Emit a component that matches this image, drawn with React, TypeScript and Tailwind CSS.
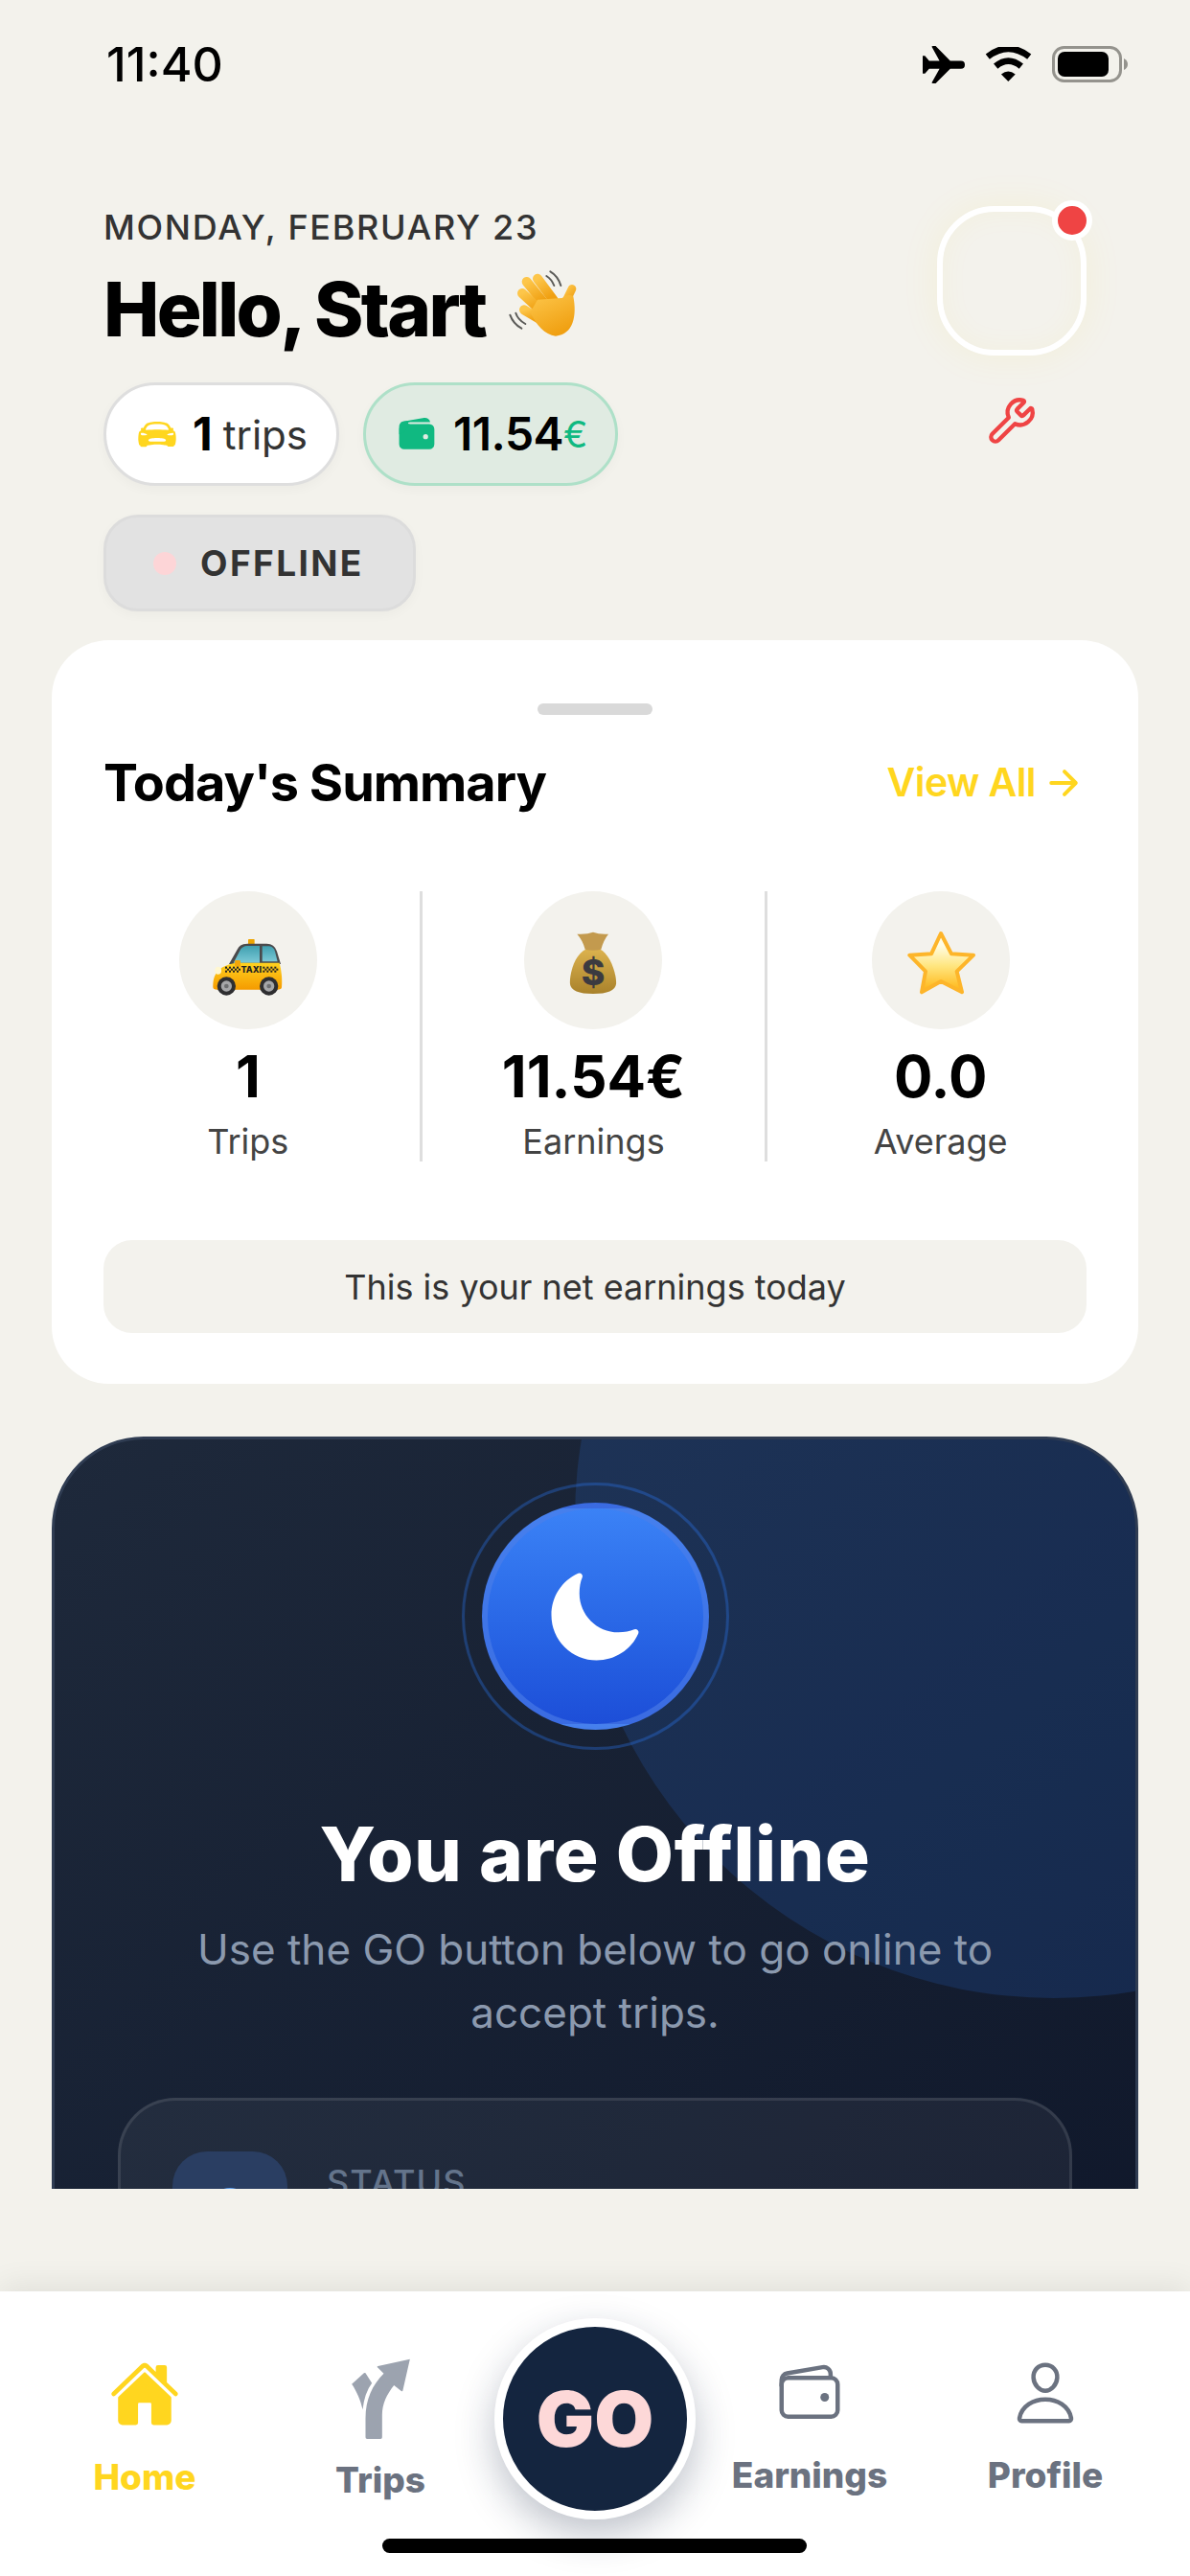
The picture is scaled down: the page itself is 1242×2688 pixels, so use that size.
import { Wrench } from "lucide-react";
import {
  IoArrowForward,
  IoCarSport,
  IoHome,
  IoMoon,
  IoPersonOutline,
  IoWallet,
  IoWalletOutline,
} from "react-icons/io5";

function StatusBar() {
  return (
    <div className="flex h-[134px] shrink-0 items-center justify-between pl-[111px] pr-[64px]">
      <span className="text-[50px] font-medium text-black">11:40</span>
      <div className="flex items-center gap-[21px]">
        <svg width="44" height="39" viewBox="0 0 130 115" fill="#000">
          <path d="M0 30H7L20 46H52L28 2Q28 0 32 0H40L85 46H118Q130 46 130 58Q130 70 118 70H85L40 115H32Q28 115 28 113L52 70H20L7 85H0Z" />
        </svg>
        <svg width="49" height="36" viewBox="0 0 145 107" fill="none" stroke="#000">
          <path d="M8 30Q72 -20 137 30" strokeWidth="20" />
          <path d="M33 60Q72 27 112 60" strokeWidth="20" />
          <path d="M50 85Q72 66 94 85L72 107Z" fill="#000" stroke="none" />
        </svg>
        <svg width="80" height="38" viewBox="0 0 80 38">
          <rect x="1.5" y="1.5" width="70" height="35" rx="11" fill="none" stroke="#94938d" strokeWidth="3" />
          <rect x="6" y="6" width="53" height="26" rx="7" fill="#000" />
          <path d="M75 13Q79 15 79 19Q79 23 75 25Z" fill="#94938d" />
        </svg>
      </div>
    </div>
  );
}

function WavingHand() {
  return (
    <svg className="-mt-[10px]" width="74" height="74" viewBox="35 35 222 222" fill="none" strokeLinecap="round">
      <defs>
        <linearGradient id="hand" x1="0" y1="0" x2="0.5" y2="1">
          <stop offset="0" stopColor="#fdc64a" />
          <stop offset="1" stopColor="#f0a012" />
        </linearGradient>
      </defs>
      <g stroke="url(#hand)" strokeWidth="30">
        <path d="M128 64L178 132" />
        <path d="M94 74L152 146" />
        <path d="M80 110L140 166" />
        <path d="M86 162L140 194" />
        <path d="M236 96L212 146" strokeWidth="26" />
      </g>
      <path d="M128 130L205 125Q225 110 240 120C252 180 240 240 185 244C150 240 125 210 105 170Z" fill="url(#hand)" />
      <g stroke="#5b5b58" strokeWidth="6">
        <path d="M168 42Q192 56 201 86" />
        <path d="M156 56Q172 66 180 86" />
        <path d="M42 178Q52 206 78 220" />
        <path d="M60 172Q66 192 90 206" />
      </g>
    </svg>
  );
}

function TaxiEmoji() {
  const checks = [108, 120, 132, 144, 226, 238, 250, 262];
  return (
    <svg width="120" height="80" viewBox="0 0 360 240">
      <defs>
        <linearGradient id="taxiBody" x1="0" y1="0" x2="0" y2="1">
          <stop offset="0" stopColor="#ffd21f" />
          <stop offset="1" stopColor="#f59b00" />
        </linearGradient>
        <linearGradient id="taxiGlass" x1="0" y1="0" x2="0" y2="1">
          <stop offset="0" stopColor="#3f9fb0" />
          <stop offset="1" stopColor="#7cc9d6" />
        </linearGradient>
      </defs>
      <rect x="180" y="54" width="20" height="16" rx="2" fill="#eda400" />
      <path d="M120 132L146 86Q156 68 178 68H238Q262 68 270 92L282 132Z" fill="#4a4a4c" />
      <path d="M134 128L154 90Q160 76 176 75H216V128Z" fill="url(#taxiGlass)" />
      <path d="M224 76H246Q260 78 264 92L272 124H224Z" fill="url(#taxiGlass)" />
      <path d="M70 205Q68 160 100 142Q118 132 140 128H278Q288 165 285 205Q285 212 270 212H84Q70 212 70 205Z" fill="url(#taxiBody)" />
      <ellipse cx="86" cy="152" rx="10" ry="12" fill="#fff7d0" />
      <rect x="138" y="120" width="18" height="20" rx="4" fill="#f3a60a" />
      {checks.map((x) => (
        <g key={x} fill="#222">
          <rect x={x} y="140" width="6" height="6" />
          <rect x={x + 6} y="146" width="6" height="6" />
          <rect x={x} y="152" width="6" height="6" />
        </g>
      ))}
      <text x="190" y="159" textAnchor="middle" fontFamily="Inter, sans-serif" fontSize="27" fontWeight="800" fill="#222">
        TAXI
      </text>
      {[112, 245].map((cx) => (
        <g key={cx}>
          <circle cx={cx} cy="201" r="29" fill="#2e2e30" />
          <circle cx={cx} cy="201" r="17" fill="#a5a6a8" />
          <circle cx={cx} cy="201" r="7" fill="#6d6e70" />
        </g>
      ))}
    </svg>
  );
}

function MoneyBagEmoji() {
  return (
    <svg width="100" height="80" viewBox="0 0 300 240">
      <defs>
        <linearGradient id="bag" x1="0" y1="0" x2="0" y2="1">
          <stop offset="0" stopColor="#dcb24e" />
          <stop offset="1" stopColor="#a9822b" />
        </linearGradient>
      </defs>
      <path d="M130 85C90 100 75 170 78 195Q82 225 150 225Q218 225 222 195C225 170 205 100 170 85Z" fill="url(#bag)" />
      <path d="M100 38Q130 40 150 32Q170 40 198 38Q182 58 175 86Q150 92 125 86Q118 58 100 38Z" fill="#c39a4e" />
      <text x="150" y="197" textAnchor="middle" fontFamily="Inter, sans-serif" fontSize="112" fontWeight="800" fill="#3b3a40">
        $
      </text>
    </svg>
  );
}

function StarEmoji() {
  return (
    <svg width="100" height="80" viewBox="0 0 300 240">
      <defs>
        <linearGradient id="star" x1="0" y1="0" x2="0" y2="1">
          <stop offset="0.2" stopColor="#fffde6" />
          <stop offset="0.55" stopColor="#ffe680" />
          <stop offset="1" stopColor="#ffb30f" />
        </linearGradient>
      </defs>
      <path
        d="M150 36L183 100L252 104L200 155L216 220L150 186L90 220L102 155L52 104L120 100Z"
        fill="url(#star)"
        stroke="#fdb52a"
        strokeWidth="12"
        strokeLinejoin="round"
      />
    </svg>
  );
}

function Header() {
  return (
    <div className="flex items-start justify-between px-[108px] pt-[81px]">
      <div>
        <p className="text-[36px] font-medium leading-[44px] tracking-[1.7px] text-[#333]">MONDAY, FEBRUARY 23</p>
        <div className="mt-[17px] flex items-center gap-[24px]">
          <h1 className="text-[78px] font-extrabold leading-[94px] tracking-[-2.7px] text-black">Hello, Start</h1>
          <WavingHand />
        </div>
        <div className="mt-[29px] flex gap-[25px]">
          <div className="flex h-[108px] items-center rounded-full border-[3px] border-[#dedede] bg-white pl-[32px] pr-[30px] shadow-[0_4px_12px_rgba(0,0,0,0.03)]">
            <IoCarSport className="text-[#ffd61f]" size={42} />
            <span className="ml-[16px] text-[48px] font-bold text-black">1</span>
            <span className="ml-[11px] text-[42px] text-[#333]">trips</span>
          </div>
          <div className="flex h-[108px] items-center rounded-full border-[3px] border-[#aee0c8] bg-[#e0ebe2] pl-[32px] pr-[29px] shadow-[0_4px_12px_rgba(0,0,0,0.03)]">
            <IoWallet className="text-[#10b981]" size={42} />
            <span className="ml-[17px] text-[48px] font-semibold tracking-[-0.5px] text-black">11.54</span>
            <span className="text-[38px] text-[#10b981]">€</span>
          </div>
        </div>
        <div className="mt-[30px] flex h-[101px] w-[326px] items-center rounded-[36px] border-[3px] border-[#dcdcdc] bg-[#e2e2e2] pl-[49px] shadow-[0_4px_12px_rgba(0,0,0,0.03)]">
          <span className="h-[24px] w-[24px] rounded-full bg-[#fdd5d7]" />
          <span className="ml-[25px] text-[37px] font-bold tracking-[2.4px] text-[#333]">OFFLINE</span>
        </div>
      </div>
      <div className="flex flex-col items-center">
        <div className="relative h-[156px] w-[156px] rounded-[60px] border-[6px] border-white shadow-[0_0_40px_rgba(255,214,10,0.08),inset_0_0_30px_rgba(255,214,10,0.05)]">
          <span className="absolute -right-[12px] -top-[12px] h-[42px] w-[42px] rounded-full border-[6px] border-white bg-[#ef4444]" />
        </div>
        <Wrench className="mt-[42px] text-[#ef4444]" size={52} strokeWidth={2} />
      </div>
    </div>
  );
}

function Stat({ icon, value, label, divided }: { icon: React.ReactNode; value: string; label: string; divided?: boolean }) {
  return (
    <div className={`flex flex-col items-center ${divided ? "border-r-[3px] border-[#dedede]" : ""}`}>
      <div className="flex h-[144px] w-[144px] items-center justify-center rounded-full bg-[#f3f2ed]">{icon}</div>
      <span className="mt-[13px] text-[60px] font-bold leading-[72px] text-black">{value}</span>
      <span className="mt-[12px] text-[36px] leading-[41px] text-[#444]">{label}</span>
    </div>
  );
}

function SummaryCard() {
  return (
    <div className="mt-[30px] rounded-[60px] bg-white px-[54px] pb-[53px] pt-[66px]">
      <div className="mx-auto h-[12px] w-[120px] rounded-full bg-[#d9d9d9]" />
      <div className="mt-[38px] flex items-center justify-between">
        <h2 className="text-[54px] font-bold leading-[66px] tracking-[-1px] text-black">Today's Summary</h2>
        <div className="mr-[3px] flex items-center gap-[8px] text-[#ffd61f]">
          <span className="text-[41px] font-semibold tracking-[-0.6px]">View All</span>
          <IoArrowForward size={42} />
        </div>
      </div>
      <div className="-mx-[28px] mt-[80px] grid grid-cols-3">
        <Stat icon={<TaxiEmoji />} value="1" label="Trips" divided />
        <Stat icon={<MoneyBagEmoji />} value="11.54€" label="Earnings" divided />
        <Stat icon={<StarEmoji />} value="0.0" label="Average" />
      </div>
      <div className="mt-[82px] flex h-[97px] items-center justify-center rounded-[30px] bg-[#f3f2ed] text-[36px] text-[#333]">
        This is your net earnings today
      </div>
    </div>
  );
}

function OfflineCard() {
  return (
    <div className="relative mt-[55px] overflow-hidden rounded-t-[96px] border-[3px] border-[#2f3c52] bg-gradient-to-br from-[#1e293b] to-[#0f172a] px-[66px] pb-[60px] pt-[45px]">
      <div className="absolute -top-[417px] left-[543px] h-[1000px] w-[1000px] rounded-full bg-blue-500/15" />
      <div className="relative flex flex-col items-center">
        <div className="flex h-[279px] w-[279px] items-center justify-center rounded-full border-[3px] border-blue-500/30">
          <div className="flex h-[237px] w-[237px] items-center justify-center rounded-full border-[6px] border-[#4f7fe8]/60 bg-gradient-to-b from-[#3b82f6] to-[#1d4ed8] text-white">
            <IoMoon size={104} />
          </div>
        </div>
        <h2 className="mt-[62px] text-[78px] font-extrabold leading-[94px] tracking-[0.6px] text-white">You are Offline</h2>
        <p className="mt-[19px] w-[880px] text-center text-[44px] leading-[66px] text-[#8b99ae]">
          Use the GO button below to go online to accept trips.
        </p>
        <div className="mt-[56px] flex w-full items-start gap-[41px] rounded-[60px] border-[3px] border-white/10 bg-white/5 px-[54px] py-[53px]">
          <div className="flex h-[120px] w-[120px] items-center justify-center rounded-[36px] bg-[#2a3e62]">
            <span className="h-[44px] w-[44px] rounded-full bg-[#60a5fa]" />
          </div>
          <span className="mt-[10px] text-[36px] font-medium leading-[44px] tracking-[1px] text-[#64748b]">STATUS</span>
        </div>
      </div>
    </div>
  );
}

function TripsIcon() {
  return (
    <svg width="61" height="84" viewBox="830 38 182 252" fill="#9ca3af">
      <path d="M873 285Q873 290 878 290H920Q925 290 925 285V215C925 180 940 150 962 122L985 140Q989 143 990 137L1012 40L912 62Q907 64 912 67L930 85C895 120 873 165 873 225Z" />
      <path d="M830 118L868 84Q871 82 873 84L893 115Q870 145 864 198C858 170 845 140 830 118Z" />
    </svg>
  );
}

function NavItem({ icon, label, active, offset }: { icon: React.ReactNode; label: string; active?: boolean; offset?: boolean }) {
  return (
    <div className={`flex flex-col items-center ${active ? "text-[#ffd61f]" : "text-[#6b7280]"}`}>
      {icon}
      <span className={`${offset ? "mt-[21px]" : "mt-[28px]"} text-[37px] font-extrabold leading-[44px]`}>{label}</span>
    </div>
  );
}

function BottomNav() {
  return (
    <div className="relative mt-auto h-[297px] shrink-0 bg-white px-[28px] pt-[70px] shadow-[0_-6px_30px_rgba(0,0,0,0.08)]">
      <div className="grid grid-cols-[246px_246px_202px_246px_246px]">
        <NavItem icon={<IoHome size={74} />} label="Home" active />
        <NavItem icon={<TripsIcon />} label="Trips" offset />
        <div className="-mt-[42px] flex justify-center">
          <div className="flex h-[210px] w-[210px] shrink-0 items-center justify-center rounded-full border-[9px] border-white bg-[#14253f] shadow-[0_16px_40px_rgba(20,37,63,0.28)]">
            <span className="text-[80px] font-black text-[#fdd8d8]">GO</span>
          </div>
        </div>
        <NavItem icon={<IoWalletOutline size={72} />} label="Earnings" />
        <NavItem icon={<IoPersonOutline size={72} />} label="Profile" />
      </div>
      <div className="absolute bottom-[24px] left-[399px] h-[15px] w-[443px] rounded-full bg-black" />
    </div>
  );
}

export default function App() {
  return (
    <div className="flex h-[2688px] w-[1242px] flex-col overflow-hidden bg-[#f3f2ec] [font-family:Inter,sans-serif]">
      <StatusBar />
      <div className="h-[2150px] shrink-0 overflow-hidden">
        <Header />
        <div className="px-[54px]">
          <SummaryCard />
          <OfflineCard />
        </div>
      </div>
      <BottomNav />
    </div>
  );
}
